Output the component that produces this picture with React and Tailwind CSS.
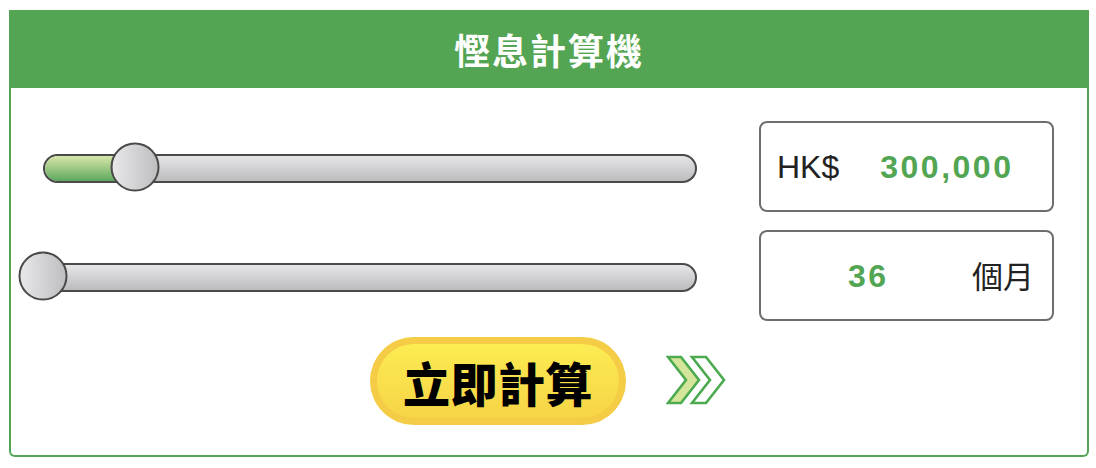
import React from 'react';

const Slider = ({ percent }) => {
  // track spans from the thumb centre at min to the right end
  return (
    <div className="relative h-[90px] flex items-center pl-[25px]">
      <div className="relative w-full h-[29px] mt-[3px] rounded-full border-2 border-[#4a4a4a] bg-gradient-to-b from-[#e6e6e8] to-[#bcbcbe] overflow-hidden">
        <div
          className="absolute left-0 top-0 h-full rounded-l-full bg-gradient-to-b from-[#d8e7a8] to-[#5ba85e]"
          style={{ width: `${percent}%` }}
        />
      </div>
      <div
        className="absolute top-1/2 -translate-y-1/2 -translate-x-1/2 w-[49px] h-[49px] rounded-full border-2 border-[#4a4a4a] bg-gradient-to-r from-[#e8e8ea] to-[#bebec0]"
        style={{ left: `calc(25px + ${percent / 100} * (100% - 25px))` }}
      />
    </div>
  );
};

const Chevrons = () => (
  <svg width="62" height="52" viewBox="0 0 62 52" className="block">
    <polygon
      points="2,2 15,2 33,25 15,48 2,48 20,25"
      fill="#d5e69a"
      stroke="#4caa50"
      strokeWidth="2.6"
      strokeLinejoin="miter"
    />
    <polygon
      points="26,2 40,2 58,25 40,48 26,48 44,25"
      fill="#ffffff"
      stroke="#4caa50"
      strokeWidth="2.6"
      strokeLinejoin="miter"
    />
  </svg>
);

export default function App() {
  const latin = { fontFamily: "'Liberation Sans', 'Noto Sans CJK TC', sans-serif" };
  const cjk = { fontFamily: "'Noto Sans CJK TC', 'Noto Sans', sans-serif" };

  return (
    <div className="w-full h-[468px] bg-white pt-[10px] px-[9px]">
      <div className="w-[1080px] h-[447px] border-2 border-t-0 border-[#53a553] rounded-b-[6px] flex flex-col">
        <div className="h-[78px] -mx-[2px] bg-[#53a553] flex items-center justify-center">
          <h1 className="text-white text-[36px] font-bold leading-none tracking-[2px]" style={cjk}>
            慳息計算機
          </h1>
        </div>

        <div className="flex-1 pt-[33px] pl-[7px] pr-[33px]">
          <div className="flex flex-col gap-[18px]">
            <div className="flex items-center gap-[62px]">
              <div className="flex-1">
                <Slider percent={14} />
              </div>
              <div className="w-[295px] h-[91px] border-2 border-[#6e6e6e] rounded-lg flex items-center pl-[16px] gap-[41px]" style={latin}>
                <span className="text-[32px] text-[#222]">HK$</span>
                <span className="text-[32px] font-bold text-[#52a552] tracking-[2.5px]">300,000</span>
              </div>
            </div>

            <div className="flex items-center gap-[62px]">
              <div className="flex-1">
                <Slider percent={0} />
              </div>
              <div className="w-[295px] h-[91px] border-2 border-[#6e6e6e] rounded-lg flex items-center pl-[87px] pr-[18px]" style={latin}>
                <span className="text-[32px] font-bold text-[#52a552] tracking-[2.5px]">36</span>
                <span className="ml-auto text-[31px] text-[#222]" style={cjk}>個月</span>
              </div>
            </div>
          </div>

          <div className="mt-[16px] flex items-center justify-center gap-[40px] pl-[26px]">
            <button className="w-[256px] h-[88px] rounded-full bg-[#f4cc45] p-[7px]">
              <div className="w-full h-full rounded-full bg-gradient-to-b from-[#fcec52] to-[#f6d446] flex items-center justify-center">
                <span className="text-[47px] font-black text-black leading-none tracking-[0.5px]" style={cjk}>
                  立即計算
                </span>
              </div>
            </button>
            <Chevrons />
          </div>
        </div>
      </div>
    </div>
  );
}
